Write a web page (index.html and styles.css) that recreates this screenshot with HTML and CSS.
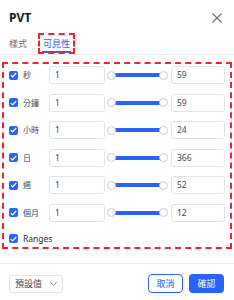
FILE: index.html
```html
<!DOCTYPE html>
<html>
<head>
<meta charset="utf-8">
<link rel="stylesheet" href="styles.css">
</head>
<body>
<div class="dialog">
  <div class="header">
    <div class="title">PVT</div>
    <svg class="close" width="10" height="10" viewBox="0 0 10 10"><path d="M0.5 0.5L9.5 9.5M9.5 0.5L0.5 9.5" stroke="#6a6d78" stroke-width="1.1" fill="none"/></svg>
  </div>
  <div class="tabs">
    <div class="tab">樣式</div>
    <div class="tab active"><span class="tab-text">可見性</span></div>
  </div>
  <div class="content">
    <div class="row">
      <span class="cb"><svg width="7" height="6" viewBox="0 0 7 6"><path d="M0.8 3.1L2.6 4.8L6.2 1" stroke="#fff" stroke-width="1.2" fill="none"/></svg></span>
      <span class="label">秒</span>
      <div class="inp">1</div>
      <div class="slider"><span class="thumb"></span><span class="track"></span><span class="thumb"></span></div>
      <div class="inp inp-r">59</div>
    </div>
    <div class="row">
      <span class="cb"><svg width="7" height="6" viewBox="0 0 7 6"><path d="M0.8 3.1L2.6 4.8L6.2 1" stroke="#fff" stroke-width="1.2" fill="none"/></svg></span>
      <span class="label">分鐘</span>
      <div class="inp">1</div>
      <div class="slider"><span class="thumb"></span><span class="track"></span><span class="thumb"></span></div>
      <div class="inp inp-r">59</div>
    </div>
    <div class="row">
      <span class="cb"><svg width="7" height="6" viewBox="0 0 7 6"><path d="M0.8 3.1L2.6 4.8L6.2 1" stroke="#fff" stroke-width="1.2" fill="none"/></svg></span>
      <span class="label">小時</span>
      <div class="inp">1</div>
      <div class="slider"><span class="thumb"></span><span class="track"></span><span class="thumb"></span></div>
      <div class="inp inp-r">24</div>
    </div>
    <div class="row">
      <span class="cb"><svg width="7" height="6" viewBox="0 0 7 6"><path d="M0.8 3.1L2.6 4.8L6.2 1" stroke="#fff" stroke-width="1.2" fill="none"/></svg></span>
      <span class="label">日</span>
      <div class="inp">1</div>
      <div class="slider"><span class="thumb"></span><span class="track"></span><span class="thumb"></span></div>
      <div class="inp inp-r">366</div>
    </div>
    <div class="row">
      <span class="cb"><svg width="7" height="6" viewBox="0 0 7 6"><path d="M0.8 3.1L2.6 4.8L6.2 1" stroke="#fff" stroke-width="1.2" fill="none"/></svg></span>
      <span class="label">週</span>
      <div class="inp">1</div>
      <div class="slider"><span class="thumb"></span><span class="track"></span><span class="thumb"></span></div>
      <div class="inp inp-r">52</div>
    </div>
    <div class="row">
      <span class="cb"><svg width="7" height="6" viewBox="0 0 7 6"><path d="M0.8 3.1L2.6 4.8L6.2 1" stroke="#fff" stroke-width="1.2" fill="none"/></svg></span>
      <span class="label">個月</span>
      <div class="inp">1</div>
      <div class="slider"><span class="thumb"></span><span class="track"></span><span class="thumb"></span></div>
      <div class="inp inp-r">12</div>
    </div>
    <div class="row row-ranges">
      <span class="cb"><svg width="7" height="6" viewBox="0 0 7 6"><path d="M0.8 3.1L2.6 4.8L6.2 1" stroke="#fff" stroke-width="1.2" fill="none"/></svg></span>
      <span class="label label-wide">Ranges</span>
    </div>
  </div>
  <div class="footer">
    <div class="select"><span>預設值</span><svg width="7" height="4" viewBox="0 0 7 4"><path d="M0.5 0.5L3.5 3.3L6.5 0.5" stroke="#6a6d78" stroke-width="0.9" fill="none"/></svg></div>
    <div class="spacer"></div>
    <div class="btn btn-outline">取消</div>
    <div class="btn btn-primary">確認</div>
  </div>
</div>
</body>
</html>
```

FILE: styles.css
```css
* { box-sizing: border-box; }
html, body { margin: 0; padding: 0; background: #fff; }
body {
  width: 234px;
  height: 300px;
  overflow: hidden;
  font-family: "Noto Sans", "Noto Sans CJK TC", sans-serif;
  color: #131722;
}
.dialog { width: 234px; }
.header {
  height: 32px;
  display: flex;
  align-items: center;
  justify-content: space-between;
  padding: 3px 12px 0 9px;
}
.title { font-size: 12px; font-weight: 700; line-height: 14px; color: #131722; }
.close { display: block; }
.tabs {
  height: 23px;
  display: flex;
  align-items: flex-start;
  padding-left: 9px;
  gap: 15px;
  border-bottom: 1px solid #e9ebf0;
}
.tab {
  font-family: "Noto Sans CJK TC", sans-serif;
  font-size: 9px;
  line-height: 13px;
  color: #6a6d78;
  padding-top: 5px;
  height: 22px;
}
.tab.active {
  color: #2962ff;
  border-bottom: 2px solid #2962ff;
  height: 21px;
}
.tab-text {
  display: block;
  outline: 2px dashed #f2212e;
  outline-offset: 2px;
  padding: 0 1px;
}
.content {
  margin: 7px 2px 0 2px;
  border: 2px dashed #f2212e;
  padding: 2px 0 0 5px;
  display: flex;
  flex-direction: column;
  gap: 9.6px;
  height: 187px;
}
.row {
  display: flex;
  align-items: center;
  height: 18px;
}
.row-ranges { height: 14px; }
.cb {
  width: 9px;
  height: 9px;
  border-radius: 2px;
  background: #2962ff;
  display: flex;
  align-items: center;
  justify-content: center;
  margin-right: 5px;
  flex: none;
}
.cb svg { display: block; }
.label {
  font-family: "Noto Sans CJK TC", sans-serif;
  font-size: 8px;
  line-height: 12px;
  width: 26px;
  color: #434651;
  flex: none;
}
.label-wide { width: auto; font-family: "Noto Sans", sans-serif; font-size: 8.5px; color: #2a2e39; }
.inp {
  width: 56px;
  height: 18px;
  border: 1px solid #e0e3eb;
  border-radius: 3px;
  font-size: 8.5px;
  line-height: 16px;
  padding-left: 5px;
  color: #434651;
  flex: none;
}
.inp-r { width: 54px; }
.slider {
  width: 66px;
  display: flex;
  align-items: center;
  padding: 0 3.5px 0 1.5px;
  flex: none;
}
.thumb {
  width: 9px;
  height: 9px;
  border-radius: 50%;
  background: #fff;
  border: 1px solid #c8cbd3;
  position: relative;
  z-index: 1;
  flex: none;
}
.track {
  flex: 1;
  height: 4px;
  background: #2962ff;
  margin: 0 -4.5px;
  border-radius: 2px;
}
.footer {
  margin-top: 14px;
  border-top: 1px solid #e9ebf0;
  padding: 10px 10px 0 9px;
  display: flex;
  align-items: center;
  gap: 6px;
}
.select {
  width: 54px;
  height: 18px;
  border: 1px solid #e0e3eb;
  border-radius: 3px;
  display: flex;
  align-items: center;
  justify-content: space-between;
  padding: 0 5px 0 5px;
  font-family: "Noto Sans CJK TC", sans-serif;
  font-size: 9px;
  color: #434651;
}
.spacer { flex: 1; }
.btn {
  width: 35px;
  height: 19px;
  border-radius: 4px;
  display: flex;
  align-items: center;
  justify-content: center;
  font-family: "Noto Sans CJK TC", sans-serif;
  font-size: 9px;
}
.btn-outline { border: 1px solid #2962ff; color: #2962ff; background: #fff; }
.btn-primary { background: #2962ff; color: #fff; }
```
